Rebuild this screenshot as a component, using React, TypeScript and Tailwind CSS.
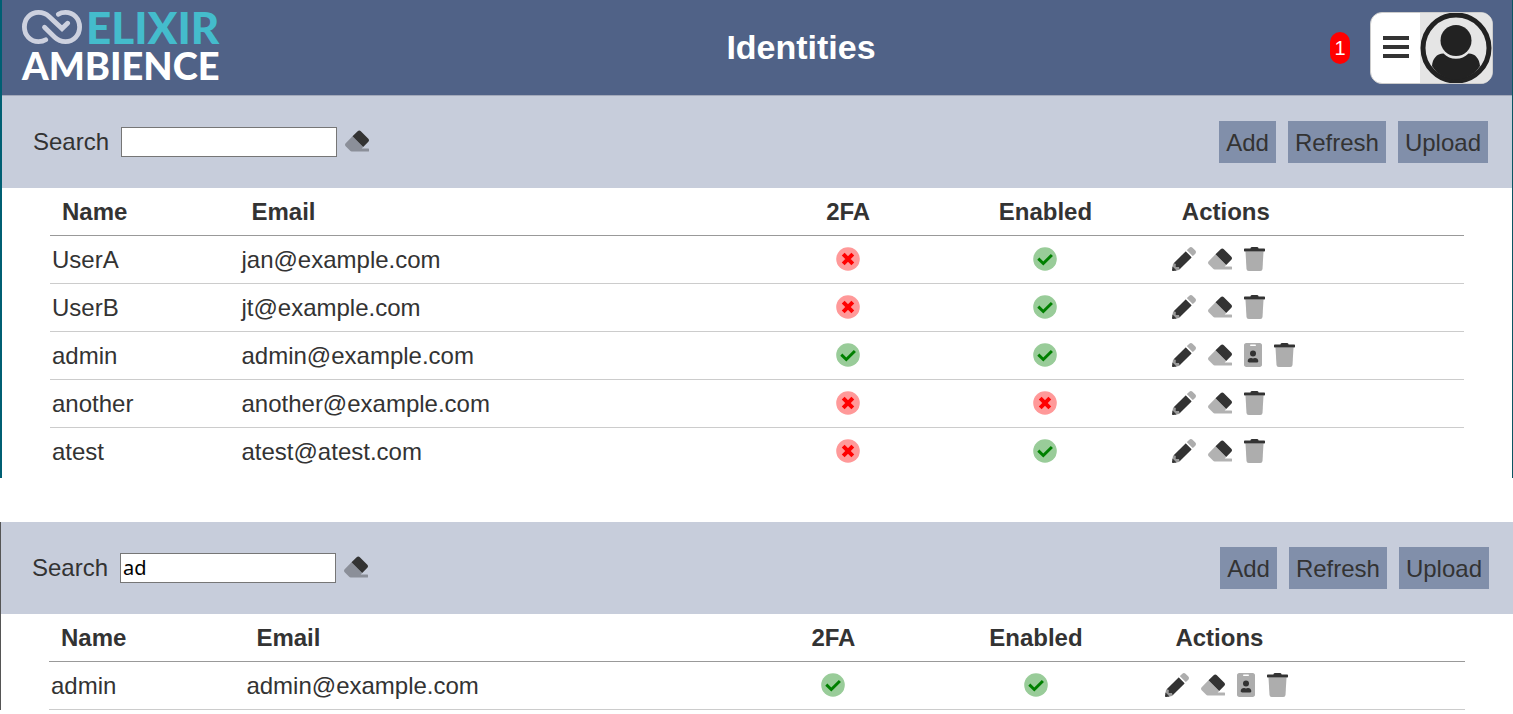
import { useId, useState } from 'react';
import { clsx } from 'clsx';

type Identity = {
  name: string;
  email: string;
  twoFactor: boolean;
  enabled: boolean;
  hasBadge?: boolean;
};

const IDENTITIES: Identity[] = [
  { name: 'UserA', email: 'jan@example.com', twoFactor: false, enabled: true },
  { name: 'UserB', email: 'jt@example.com', twoFactor: false, enabled: true },
  { name: 'admin', email: 'admin@example.com', twoFactor: true, enabled: true, hasBadge: true },
  { name: 'another', email: 'another@example.com', twoFactor: false, enabled: false },
  { name: 'atest', email: 'atest@atest.com', twoFactor: false, enabled: true },
];

const WIDE_COLUMNS = ['w-[13.4%]', 'w-[37.9%]', 'w-[10.3%]', 'w-[17.6%]', 'w-[20.8%]'];
const FILTERED_COLUMNS = ['w-[13.8%]', 'w-[36.3%]', 'w-[10.6%]', 'w-[18%]', 'w-[21.3%]'];

function EraserIcon() {
  return (
    <svg viewBox="0 0 512 512" className="block size-6" aria-hidden="true">
      <path
        className="fill-black/30"
        d="M160 156L14.1 302.1c-18.7 18.7-18.7 49.1 0 67.800l96 96A48 48 0 0 0 144 480h356c6.600 0 12-5.400 12-12v-40c0-6.600-5.400-12-12-12H355.900l32-32z"
      />
      <path
        className="fill-[#333]"
        d="M497.900 273.900c18.800-18.700 18.800-49.100 0-67.800l-160-160c-18.700-18.800-49.100-18.800-67.800 0L160 156l228 228z"
      />
    </svg>
  );
}

function PencilIcon() {
  return (
    <svg viewBox="0 0 512 512" className="block size-6" aria-hidden="true">
      <path
        className="fill-[#adadad]"
        d="M497.900 142.100l-46.100 46.100c-4.700 4.700-12.300 4.700-17 0l-111-111c-4.700-4.700-4.700-12.300 0-17l46.100-46.100c18.700-18.700 49.100-18.700 67.900 0l60.100 60.100c18.800 18.700 18.800 49.100 0 67.900z"
      />
      <path className="fill-[#999]" d="M50 334L21.600 362.400 8 440l64 64 77.900-13.600L178 462z" />
      <path
        className="fill-[#333]"
        d="M284.200 99.800L36 348l44 14v66h66l18 48 248.500-248.200c4.700-4.700 4.700-12.300 0-17l-111-111c-4.800-4.700-12.400-4.700-17.300 0z"
      />
      <path className="fill-[#333]" d="M12 416L.4 483.900c-2.900 16.400 11.400 30.600 27.800 27.800L96 500z" />
    </svg>
  );
}

function BadgeIcon() {
  return (
    <svg viewBox="0 0 384 512" className="block h-6 w-[18px]" aria-hidden="true">
      <path
        className="fill-[#adadad]"
        fillRule="evenodd"
        d="M336 0H48C21.500 0 0 21.500 0 48v416c0 26.500 21.500 48 48 48h288c26.500 0 48-21.500 48-48V48c0-26.500-21.500-48-48-48zM144 32h96a16 16 0 0 1 0 32h-96a16 16 0 0 1 0-32z"
      />
      <circle cx="192" cy="224" r="64" className="fill-[#333]" />
      <path
        className="fill-[#333]"
        d="M304 396.800c0 10.600-10 19.200-22.400 19.200H102.400C90 416 80 407.400 80 396.800v-19.200c0-31.800 30.100-57.600 67.200-57.600h5c12.300 5.100 25.700 8 39.800 8s27.600-2.900 39.800-8h5c37.100 0 67.200 25.800 67.200 57.600z"
      />
    </svg>
  );
}

function TrashIcon() {
  return (
    <svg viewBox="0 0 448 512" className="block h-6 w-[21px]" aria-hidden="true">
      <path className="fill-[#adadad]" d="M53.200 467a48 48 0 0 0 47.900 45h245.800a48 48 0 0 0 47.900-45L416 96H32z" />
      <path
        className="fill-[#333]"
        d="M432 32H312l-9.400-18.700A24 24 0 0 0 281.100 0H166.800a23.700 23.700 0 0 0-21.400 13.300L136 32H16A16 16 0 0 0 0 48v32a16 16 0 0 0 16 16h416a16 16 0 0 0 16-16V48a16 16 0 0 0-16-16z"
      />
    </svg>
  );
}

function StatusIcon({ on }: { on: boolean }) {
  return (
    <svg viewBox="0 0 24 24" className="mx-auto block size-6" role="img" aria-label={on ? 'Yes' : 'No'}>
      <circle cx="12" cy="12" r="11.800" className={on ? 'fill-[#99cc99]' : 'fill-[#ff9999]'} />
      {on ? (
        <path d="M5.300 11.700l5 4.800L18.900 8" fill="none" stroke="#008000" strokeWidth="3" />
      ) : (
        <path d="M7.200 7.200l9.600 9.600M16.800 7.200l-9.600 9.600" fill="none" stroke="#ff0000" strokeWidth="4" />
      )}
    </svg>
  );
}

function Logo() {
  return (
    <a href="#" className="flex flex-col pb-1 font-['Lato',sans-serif] font-black text-white">
      <span className="flex items-center gap-1">
        <svg viewBox="0 0 60 34" className="h-[34px] w-[60px]" aria-hidden="true">
          <g fill="none" stroke="#cdd1df" strokeWidth="4.800" strokeLinecap="round">
            <path d="M23.700 29.800C21.500 31.200 19 31.600 16.500 31.600C8.300 31.600 2.400 25.100 2.400 17S8.300 2.400 16.500 2.400C21 2.400 24.400 3.900 27.300 6.700L40 18.600L45.600 13.200" />
            <path d="M36.300 4.200C38.500 2.800 41 2.400 43.500 2.400C51.700 2.400 57.600 8.900 57.600 17S51.700 31.600 43.500 31.600C39 31.600 35.600 30.100 32.700 27.300L22.500 17.200" />
          </g>
        </svg>
        <span className="text-[44px] leading-[38px] text-[#44bccc]">ELIXIR</span>
      </span>
      <span className="text-[38px] leading-[38px]">AMBIENCE</span>
    </a>
  );
}

function UserMenu() {
  return (
    <button
      type="button"
      aria-label="User menu"
      className="flex h-[72px] items-stretch overflow-hidden rounded-xl border border-[#ccc] bg-white"
    >
      <span className="flex w-[49px] flex-col items-center justify-center gap-[5px] pb-0.5">
        <span className="h-1 w-[26px] bg-[#333]" />
        <span className="h-1 w-[26px] bg-[#333]" />
        <span className="h-1 w-[26px] bg-[#333]" />
      </span>
      <svg viewBox="0 0 72 70" className="w-[72px] bg-[#e5e5e5]" aria-hidden="true">
        <circle cx="36" cy="35" r="33" fill="none" stroke="#222" strokeWidth="5" />
        <circle cx="36" cy="27.500" r="15.500" fill="#222" />
        <path
          fill="#222"
          d="M23.500 40.500C16.500 40.500 12.500 46 12 53C18 62 27 66.500 36 66.500S54 62 60 53C59.500 46 55.500 40.500 48.500 40.500C45 44 41 45.800 36 45.800S27 44 23.500 40.500z"
        />
      </svg>
    </button>
  );
}

function Toolbar({ query, onQuery }: { query: string; onQuery: (value: string) => void }) {
  const id = useId();

  return (
    <div className="flex items-center justify-between bg-[#c7cddb] py-[25px] pr-6 pl-[31px]">
      <div className="flex items-center">
        <label htmlFor={id} className="mr-3">
          Search
        </label>
        <input
          id={id}
          type="text"
          value={query}
          onChange={(e) => onQuery(e.target.value)}
          className="h-[30px] w-[216px] border border-[#767676] bg-white px-0.5 font-['Noto_Sans',sans-serif] text-[20px] text-black"
        />
        <button type="button" aria-label="Clear search" onClick={() => onQuery('')} className="ml-2 pb-0.5">
          <EraserIcon />
        </button>
      </div>
      <div className="flex gap-3">
        {['Add', 'Refresh', 'Upload'].map((label) => (
          <button key={label} type="button" className="h-[42px] bg-[#818faa] px-[7px] pt-0.5">
            {label}
          </button>
        ))}
      </div>
    </div>
  );
}

type TableProps = {
  rows: Identity[];
  columns: string[];
  closed?: boolean;
};

function IdentityTable({ rows, columns, closed }: TableProps) {
  return (
    <div className="px-12">
      <table className="w-full table-fixed border-separate border-spacing-0">
        <colgroup>
          {columns.map((width) => (
            <col key={width} className={width} />
          ))}
        </colgroup>
        <thead>
          <tr className="[&>th]:h-12 [&>th]:border-b [&>th]:border-[#999] [&>th]:px-3 [&>th]:py-0">
            <th className="text-left">Name</th>
            <th className="text-left">Email</th>
            <th>2FA</th>
            <th>Enabled</th>
            <th className="text-left">Actions</th>
          </tr>
        </thead>
        <tbody>
          {rows.map((row, index) => (
            <tr
              key={row.name}
              className={clsx(
                '[&>td]:h-12 [&>td]:px-0.5 [&>td]:py-0',
                (closed || index < rows.length - 1) && '[&>td]:border-b [&>td]:border-[#ccc]',
              )}
            >
              <td>{row.name}</td>
              <td>{row.email}</td>
              <td>
                <div className="pb-0.5">
                  <StatusIcon on={row.twoFactor} />
                </div>
              </td>
              <td>
                <div className="pb-0.5">
                  <StatusIcon on={row.enabled} />
                </div>
              </td>
              <td>
                <div className="flex items-center gap-3 pb-0.5">
                  <button type="button" aria-label={`Edit ${row.name}`}>
                    <PencilIcon />
                  </button>
                  <button type="button" aria-label={`Clear ${row.name}`}>
                    <EraserIcon />
                  </button>
                  {row.hasBadge && (
                    <button type="button" aria-label={`Badge of ${row.name}`}>
                      <BadgeIcon />
                    </button>
                  )}
                  <button type="button" aria-label={`Delete ${row.name}`}>
                    <TrashIcon />
                  </button>
                </div>
              </td>
            </tr>
          ))}
        </tbody>
      </table>
    </div>
  );
}

export default function App() {
  const [query, setQuery] = useState('');
  const [filter, setFilter] = useState('ad');

  return (
    <main className="min-h-screen bg-white font-['Liberation_Sans',Arial,sans-serif] text-[24px] leading-8 text-[#333]">
      <section className="border-r border-l-2 border-r-[#0b5563] border-l-[#005f73] pb-0.5">
        <header className="grid h-24 grid-cols-[250px_1fr_auto] items-center border-b border-[#a3a9ba] bg-[#506287] pr-[19px] pl-5">
          <Logo />
          <h1 className="pb-0.5 text-center text-[34px] leading-10 font-bold text-white">Identities</h1>
          <div className="flex items-center justify-end gap-5">
            <span className="flex h-8 w-5 items-center justify-center rounded-full bg-[#ff0000] text-[20px] text-white">
              1
            </span>
            <UserMenu />
          </div>
        </header>
        <Toolbar query={query} onQuery={setQuery} />
        <IdentityTable rows={IDENTITIES.filter((row) => row.name.includes(query))} columns={WIDE_COLUMNS} />
      </section>

      <section className="mt-11 border-l border-[#555]">
        <Toolbar query={filter} onQuery={setFilter} />
        <IdentityTable rows={IDENTITIES.filter((row) => row.name.includes(filter))} columns={FILTERED_COLUMNS} closed />
      </section>
    </main>
  );
}
